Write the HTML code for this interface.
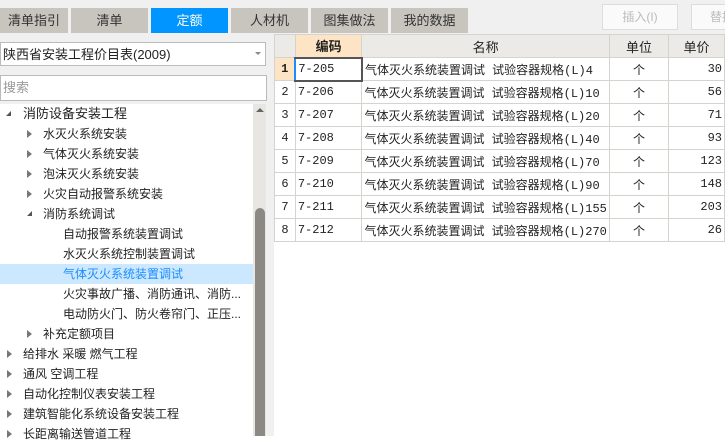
<html><head><style>
body{margin:0;width:725px;height:436px;overflow:hidden;background:#fff;font-family:"Liberation Sans","Noto Sans CJK SC",sans-serif;font-size:12px;color:#222;position:relative}
.a{position:absolute}
.tab{position:absolute;top:8px;height:25px;background:#c8c5bf;text-align:center;line-height:25px;font-size:13px;color:#333}
.tr{position:absolute;height:20px;line-height:20px;font-size:12px;white-space:nowrap}
.tri{position:absolute;width:0;height:0;border-top:4px solid transparent;border-bottom:4px solid transparent;border-left:5px solid #777}
.dn{position:absolute;width:0;height:0;border-left:5px solid transparent;border-bottom:5px solid #555}
table{border-collapse:collapse;position:absolute;left:274px;top:34px;table-layout:fixed}
tr{height:23px}
td{border:1px solid #d6d3ce;height:23px;box-sizing:border-box;padding:0 2px;white-space:nowrap;overflow:hidden;font-family:"Liberation Mono","Noto Sans CJK SC",monospace;font-size:12px}
th{border:1px solid #d6d3ce;height:23px;box-sizing:border-box;background:#eceae7;font-weight:normal;font-size:13px}
</style></head><body>
<div class="a" style="left:0;top:0;width:725px;height:34px;background:#f0f0f0"></div>
<div class="tab" style="left:0;width:68px">清单指引</div>
<div class="tab" style="left:71px;width:77px">清单</div>
<div class="tab" style="left:151px;width:77px;background:#0095ff;color:#fff">定额</div>
<div class="tab" style="left:231px;width:77px">人材机</div>
<div class="tab" style="left:311px;width:77px">图集做法</div>
<div class="tab" style="left:391px;width:77px">我的数据</div>
<div class="a" style="left:602px;top:4px;width:74px;height:24px;border:1px solid #ddd;background:#fafafa;color:#bbb;text-align:center;line-height:24px">插入(I)</div>
<div class="a" style="left:691px;top:4px;width:40px;height:24px;border:1px solid #ddd;background:#fafafa;color:#bbb;line-height:24px;padding-left:18px">替换</div>
<div class="a" style="left:0;top:34px;width:274px;height:402px;background:#f0f0f0"></div>
<div class="a" style="left:0;top:42px;width:266px;height:24px;border:1px solid #bbb;background:#fff;line-height:24px;font-size:13px;padding-left:2px;box-sizing:border-box">陕西省安装工程价目表(2009)</div>
<div class="a" style="left:255px;top:52px;border-left:3px solid transparent;border-right:3px solid transparent;border-top:3px solid #888"></div>
<div class="a" style="left:0;top:75px;width:267px;height:26px;border:1px solid #bbb;background:#fff;line-height:24px;font-size:13px;padding-left:2px;color:#999;box-sizing:border-box">搜索</div>
<div class="a" style="left:0;top:104px;width:266px;height:332px;background:#fff"></div>
<div class="a" style="left:253px;top:104px;width:13px;height:332px;background:#e8e6e3"></div>
<div class="a" style="left:256px;top:108px;border-left:4px solid transparent;border-right:4px solid transparent;border-bottom:4px solid #666"></div>
<div class="a" style="left:255px;top:208px;width:10px;height:228px;background:#8c8985;border-radius:5px 5px 0 0"></div>
<div class="a" style="left:0;top:264px;width:253px;height:20px;background:#cce8ff"></div>
<div class="dn" style="left:6px;top:111px"></div><div class="tr" style="left:23px;top:104px;font-size:13px">消防设备安装工程</div>
<div class="tri" style="left:27px;top:130px"></div><div class="tr" style="left:43px;top:124px">水灭火系统安装</div>
<div class="tri" style="left:27px;top:150px"></div><div class="tr" style="left:43px;top:144px">气体灭火系统安装</div>
<div class="tri" style="left:27px;top:170px"></div><div class="tr" style="left:43px;top:164px">泡沫灭火系统安装</div>
<div class="tri" style="left:27px;top:190px"></div><div class="tr" style="left:43px;top:184px">火灾自动报警系统安装</div>
<div class="dn" style="left:27px;top:211px"></div><div class="tr" style="left:43px;top:204px">消防系统调试</div>
<div class="tr" style="left:63px;top:224px">自动报警系统装置调试</div>
<div class="tr" style="left:63px;top:244px">水灭火系统控制装置调试</div>
<div class="tr" style="left:63px;top:264px;color:#1a8cff">气体灭火系统装置调试</div>
<div class="tr" style="left:63px;top:284px">火灾事故广播、消防通讯、消防...</div>
<div class="tr" style="left:63px;top:304px">电动防火门、防火卷帘门、正压...</div>
<div class="tri" style="left:27px;top:330px"></div><div class="tr" style="left:43px;top:324px">补充定额项目</div>
<div class="tri" style="left:7px;top:350px"></div><div class="tr" style="left:23px;top:344px">给排水 采暖 燃气工程</div>
<div class="tri" style="left:7px;top:370px"></div><div class="tr" style="left:23px;top:364px">通风 空调工程</div>
<div class="tri" style="left:7px;top:390px"></div><div class="tr" style="left:23px;top:384px">自动化控制仪表安装工程</div>
<div class="tri" style="left:7px;top:410px"></div><div class="tr" style="left:23px;top:404px">建筑智能化系统设备安装工程</div>
<div class="tri" style="left:7px;top:430px"></div><div class="tr" style="left:23px;top:424px">长距离输送管道工程</div>
<table>
<colgroup><col style="width:22px"><col style="width:70px"><col style="width:244px"><col style="width:65px"><col style="width:60px"></colgroup>
<tr><th></th><th style="background:#fde4c4;font-weight:bold">编码</th><th>名称</th><th>单位</th><th>单价</th></tr>
<tr><td style="background:#fde4c4;font-weight:bold;text-align:center">1</td><td style="border:2px solid #555;border-left:2px solid #1a8cff">7-205</td><td>气体灭火系统装置调试 试验容器规格(L)4</td><td style="text-align:center">个</td><td style="text-align:right">30</td></tr>
<tr><td style="text-align:center">2</td><td>7-206</td><td>气体灭火系统装置调试 试验容器规格(L)10</td><td style="text-align:center">个</td><td style="text-align:right">56</td></tr>
<tr><td style="text-align:center">3</td><td>7-207</td><td>气体灭火系统装置调试 试验容器规格(L)20</td><td style="text-align:center">个</td><td style="text-align:right">71</td></tr>
<tr><td style="text-align:center">4</td><td>7-208</td><td>气体灭火系统装置调试 试验容器规格(L)40</td><td style="text-align:center">个</td><td style="text-align:right">93</td></tr>
<tr><td style="text-align:center">5</td><td>7-209</td><td>气体灭火系统装置调试 试验容器规格(L)70</td><td style="text-align:center">个</td><td style="text-align:right">123</td></tr>
<tr><td style="text-align:center">6</td><td>7-210</td><td>气体灭火系统装置调试 试验容器规格(L)90</td><td style="text-align:center">个</td><td style="text-align:right">148</td></tr>
<tr><td style="text-align:center">7</td><td>7-211</td><td>气体灭火系统装置调试 试验容器规格(L)155</td><td style="text-align:center">个</td><td style="text-align:right">203</td></tr>
<tr><td style="text-align:center">8</td><td>7-212</td><td>气体灭火系统装置调试 试验容器规格(L)270</td><td style="text-align:center">个</td><td style="text-align:right">26</td></tr>
</table>
</body></html>
